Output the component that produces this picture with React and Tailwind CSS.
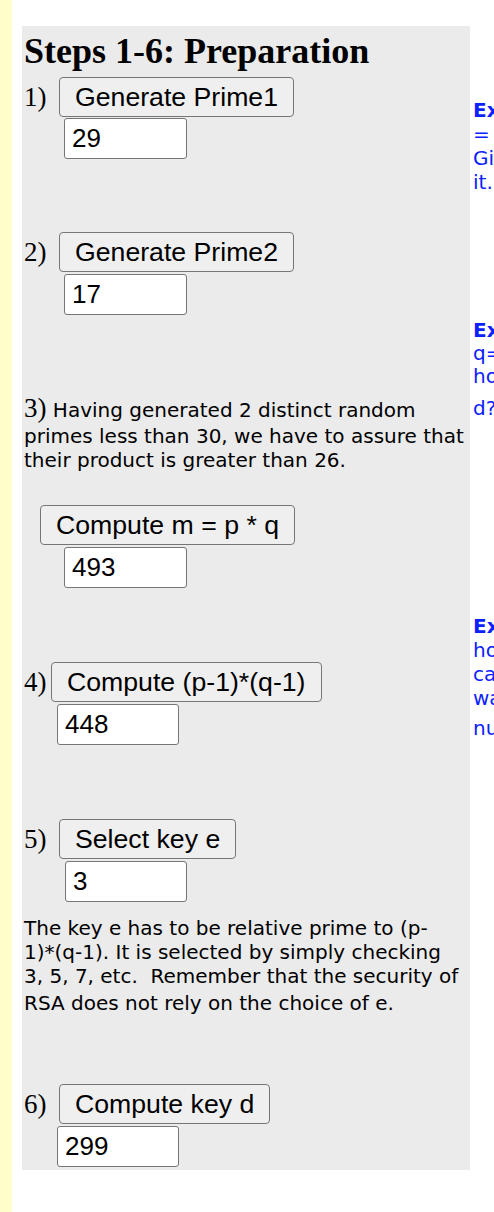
import React from "react";

const serif = "font-['Liberation_Serif',serif]";
const sans = "font-['Liberation_Sans',Arial,sans-serif]";
const verdana = "font-['DejaVu_Sans',Verdana,sans-serif]";

const StepButton = ({ children, className = "" }) => (
  <button
    className={`h-[40px] px-[15px] border border-[#767676] rounded-[4px] bg-[#efefef] text-black text-[26.67px] leading-[30px] ${sans} ${className}`}
  >
    {children}
  </button>
);

const ValueBox = ({ value, className = "" }) => (
  <input
    readOnly
    value={value}
    className={`block h-[41px] border border-[#767676] rounded-[3px] bg-white px-[7px] text-black text-[26px] ${sans} outline-none ${className}`}
  />
);

const Label = ({ children, w = "w-[35px]" }) => (
  <span className={`${w} shrink-0 text-[27px] leading-[40px] text-black ${serif}`}>{children}</span>
);

const Line = ({ children, className = "" }) => (
  <div className={`whitespace-nowrap leading-[24px] ${className}`}>{children}</div>
);

const Note = ({ lines, lead = "leading-[25px]", className = "" }) => (
  <div className={`flex flex-col text-[20px] text-[#0a22ff] ${verdana} ${className}`}>
    {lines.map((l, i) => (
      <div key={i} className={`whitespace-nowrap ${lead} ${l.cls || ""}`}>
        {l.bold ? <b>{l.bold}</b> : null}
        {l.text}
      </div>
    ))}
  </div>
);

export default function App() {
  return (
    <div className="w-[494px] h-[1212px] overflow-hidden bg-white flex">
      <div className="w-[12px] h-full shrink-0 bg-[#ffffcc]" />

      <div className="ml-[10px] mt-[26px] w-[448px] shrink-0 self-start bg-[#ebebeb] pl-[2px] pt-[5px] pb-[3px] flex flex-col">
        <h1 className={`text-[36px] leading-[40px] font-bold text-black ${serif}`}>Steps 1-6: Preparation</h1>

        {/* 1 */}
        <div className="mt-[6px] flex items-center">
          <Label>1)</Label>
          <StepButton>Generate Prime1</StepButton>
        </div>
        <ValueBox value="29" className="mt-[1px] ml-[40px] w-[123px]" />

        {/* 2 */}
        <div className="mt-[73px] flex items-center">
          <Label>2)</Label>
          <StepButton>Generate Prime2</StepButton>
        </div>
        <ValueBox value="17" className="mt-[2px] ml-[40px] w-[123px]" />

        {/* 3 */}
        <div className={`mt-[81px] text-[20px] text-black ${verdana}`}>
          <Line className="mb-[2px]">
            <span className={`text-[27px] leading-[24px] ${serif}`}>3)</span> Having generated 2 distinct random
          </Line>
          <Line>primes less than 30, we have to assure that</Line>
          <Line>their product is greater than 26.</Line>
        </div>
        <div className="mt-[33px] ml-[16px] flex">
          <StepButton>Compute m = p * q</StepButton>
        </div>
        <ValueBox value="493" className="mt-[2px] ml-[40px] w-[123px]" />

        {/* 4 */}
        <div className="mt-[74px] flex items-center">
          <Label w="w-[27px]">4)</Label>
          <StepButton>Compute (p-1)*(q-1)</StepButton>
        </div>
        <ValueBox value="448" className="mt-[2px] ml-[33px] w-[122px]" />

        {/* 5 */}
        <div className="mt-[74px] flex items-center">
          <Label>5)</Label>
          <StepButton>Select key e</StepButton>
        </div>
        <ValueBox value="3" className="mt-[2px] ml-[41px] w-[122px]" />
        <div className={`mt-[14px] text-[20px] text-black ${verdana}`}>
          <Line>The key e has to be relative prime to (p-</Line>
          <Line>1)*(q-1). It is selected by simply checking</Line>
          <Line>3, 5, 7, etc.&nbsp; Remember that the security of</Line>
          <Line className="mt-[3px]">RSA does not rely on the choice of e.</Line>
        </div>

        {/* 6 */}
        <div className="mt-[69px] flex items-center">
          <Label>6)</Label>
          <StepButton>Compute key d</StepButton>
        </div>
        <ValueBox value="299" className="mt-[2px] ml-[33px] w-[122px]" />
      </div>

      <div className="ml-[3px] shrink-0 flex flex-col">
        <Note
          className="mt-[98px]"
          lead="leading-[24px]"
          lines={[
            { bold: "Exercise:", text: " Is 493" },
            { text: "= 29 * 17 the only factorization?" },
            { text: "Give reasons for" },
            { text: "it." },
          ]}
        />
        <Note
          className="mt-[125px]"
          lead="leading-[23px]"
          lines={[
            { bold: "Exercise:", text: " Given p=29 and" },
            { text: "q=17, compute m and find out" },
            { text: "how many possible keys" },
            { text: "d?", cls: "mt-[9px]" },
          ]}
        />
        <Note
          className="mt-[194px]"
          lead="leading-[24px]"
          lines={[
            { bold: "Exercise:", text: " Find out" },
            { text: "how many numbers" },
            { text: "can be encrypted in this" },
            { text: "way with this" },
            { text: "number m.", cls: "mt-[6px]" },
          ]}
        />
      </div>
    </div>
  );
}
